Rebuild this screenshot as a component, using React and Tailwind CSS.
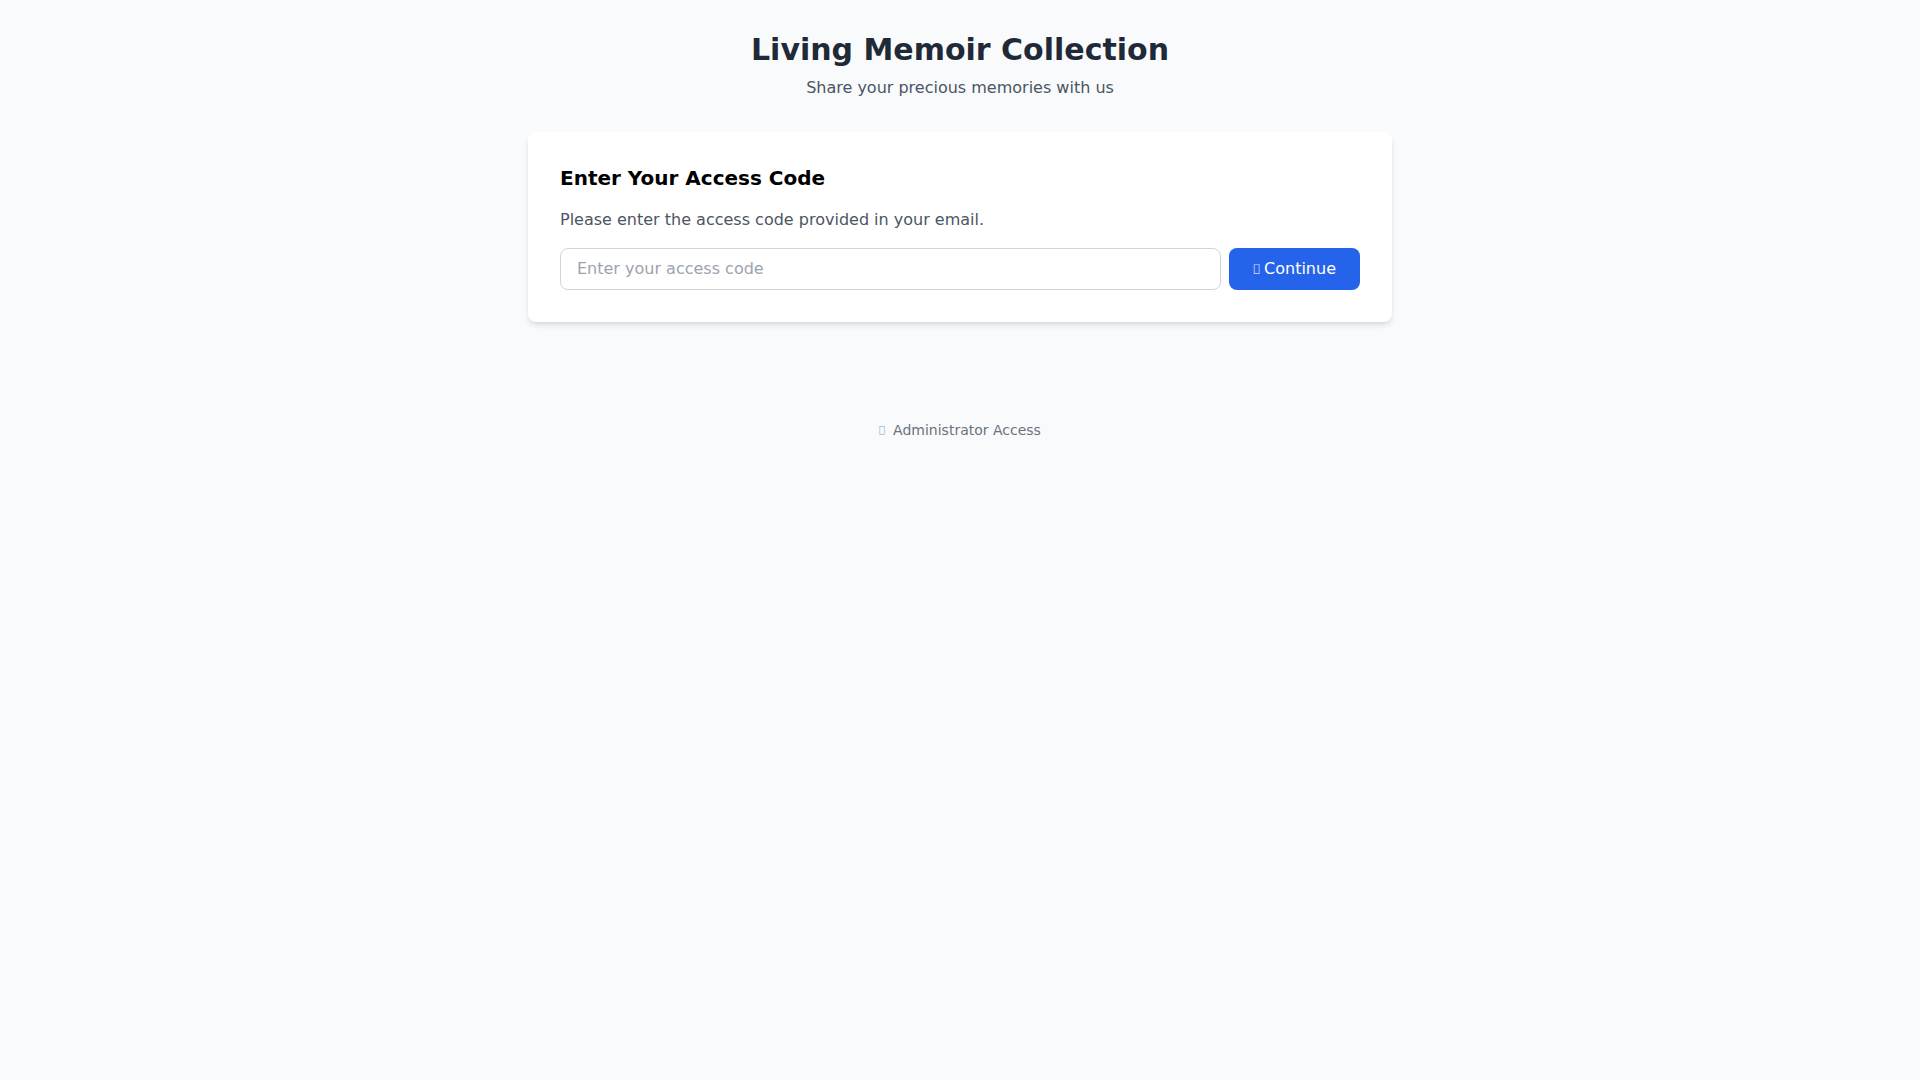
export default function App() {
  return (
    <div className="min-h-screen bg-[#f9fafb]" style={{ fontFamily: '"DejaVu Sans", sans-serif' }}>
      <div className="max-w-4xl mx-auto px-4 py-8">
        <div className="text-center mb-8">
          <h1 className="text-3xl font-bold text-[#1f2937]">Living Memoir Collection</h1>
          <p className="mt-2 text-base text-[#4b5563]">Share your precious memories with us</p>
        </div>
        <div className="bg-white rounded-lg shadow-md p-8">
          <h2 className="text-xl font-semibold text-black mb-4">Enter Your Access Code</h2>
          <p className="text-[#4b5563] mb-4">Please enter the access code provided in your email.</p>
          <div className="flex gap-2">
            <input
              type="text"
              placeholder="Enter your access code"
              className="flex-1 border border-[#d1d5db] rounded-lg px-4 py-2 text-base leading-6 placeholder-[#9ca3af] outline-none"
            />
            <button className="bg-[#2563eb] text-white rounded-lg px-6 py-2 text-base leading-6 flex items-center gap-1">
              <span className="text-[11px] opacity-80">{"\uf090"}</span>
              <span>Continue</span>
            </button>
          </div>
        </div>
        <div className="text-center mt-[94px]">
          <a className="text-sm text-[#6b7280] inline-flex items-center gap-2">
            <span className="text-[10px] text-[#9ca3af]">{"\uf023"}</span>
            <span>Administrator Access</span>
          </a>
        </div>
      </div>
    </div>
  );
}
